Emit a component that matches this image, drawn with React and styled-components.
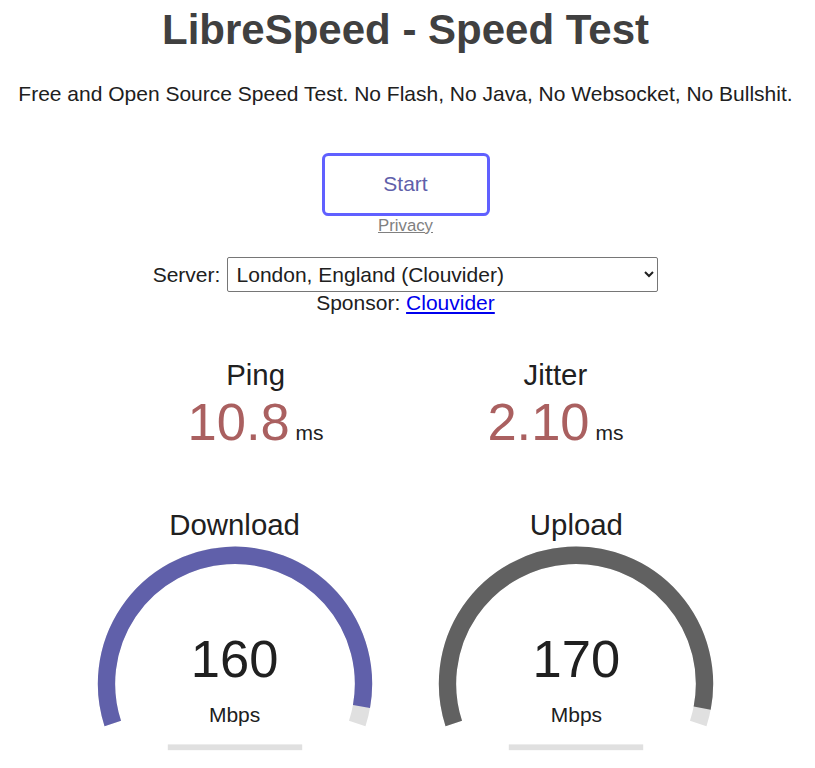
import React from "react";
import styled, { createGlobalStyle } from "styled-components";

const E = 21;

const GlobalStyle = createGlobalStyle`
  html, body {
    margin: 0;
    padding: 0;
    border: none;
    background: #ffffff;
    color: #202020;
  }
  body {
    font-family: "Liberation Sans", Arial, sans-serif;
    font-size: ${E}px;
    text-align: center;
  }
`;

const Page = styled.div`
  display: flex;
  flex-direction: column;
  align-items: center;
  padding-right: 4px;
`;

const Title = styled.h1`
  margin: 6px 0 0;
  font-size: ${2 * E}px;
  line-height: 48px;
  font-weight: bold;
  color: #404040;
`;

const Tagline = styled.p`
  margin: 28px 0 0;
  font-size: ${E}px;
  line-height: 24px;
`;

const StartButton = styled.button`
  margin-top: 47px;
  box-sizing: border-box;
  width: ${8 * E}px;
  height: ${3 * E}px;
  padding: 0;
  font-family: inherit;
  font-size: ${E}px;
  line-height: ${2.7 * E}px;
  color: #6060aa;
  background: transparent;
  border: ${0.15 * E}px solid #6060ff;
  border-radius: ${0.3 * E}px;
  cursor: pointer;
`;

const PrivacyLink = styled.a`
  display: block;
  margin-top: 0;
  font-size: ${0.8 * E}px;
  line-height: 19px;
  color: #808080;
  text-decoration: underline;
`;

const ServerRow = styled.div`
  margin-top: 22px;
  display: flex;
  align-items: center;
  gap: 7px;
  font-size: ${E}px;
`;

const ServerSelect = styled.select`
  box-sizing: border-box;
  width: 431px;
  height: 35px;
  font-family: inherit;
  font-size: ${E}px;
  padding: ${0.2 * E}px;
  color: #202020;
  background: #ffffff;
  border: 1px solid #767676;
  border-radius: 2px;
`;

const SponsorLine = styled.div`
  margin-top: -1px;
  line-height: 24px;
`;

const SponsorLink = styled.a`
  color: #0000ee;
  text-decoration: underline;
`;

const TestArea = styled.div`
  margin-top: 43px;
  display: flex;
  flex-direction: column;
  align-items: center;
`;

const TestGroup = styled.div`
  display: flex;
  justify-content: center;
  gap: ${0.278 * E}px;
`;

const MetricCard = styled.div`
  width: ${14 * E}px;
  height: ${7 * E}px;
  display: flex;
  flex-direction: column;
  align-items: center;
`;

const TestName = styled.div`
  font-size: ${1.4 * E}px;
  line-height: 34px;
`;

const ValueRow = styled.div`
  display: flex;
  align-items: baseline;
  justify-content: center;
  gap: ${0.278 * E}px;
`;

const MeterText = styled.div`
  font-size: ${2.5 * E}px;
  line-height: 60px;
  color: ${(p) => p.$color || "#202020"};
`;

const Unit = styled.div`
  font-size: ${E}px;
  line-height: 24px;
`;

const GaugeBox = styled.div`
  width: ${16 * E}px;
  height: ${12.5 * E}px;
  display: grid;
  & > * {
    grid-area: 1 / 1;
  }
`;

const GaugeSvg = styled.svg`
  width: 100%;
  height: 100%;
  display: block;
`;

const GaugeOverlay = styled.div`
  display: flex;
  flex-direction: column;
  align-items: center;
  position: relative;
  z-index: 1;
`;

const GaugeName = styled(TestName)`
  margin-top: ${0.1 * E * 1.4}px;
  flex: 1;
`;

const GaugeUnit = styled(Unit)`
  margin-top: 14px;
  margin-bottom: 41px;
`;

const meterBk = "#E0E0E0";

function arcPath(cx, cy, r, a0, a1) {
  const x0 = cx + r * Math.cos(a0);
  const y0 = cy + r * Math.sin(a0);
  const x1 = cx + r * Math.cos(a1);
  const y1 = cy + r * Math.sin(a1);
  const large = a1 - a0 > Math.PI ? 1 : 0;
  return `M ${x0} ${y0} A ${r} ${r} 0 ${large} 1 ${x1} ${y1}`;
}

function Gauge({ name, value, unit, color, mbps }) {
  const W = 16 * E;
  const H = 12.5 * E;
  const s = H * 0.0055;
  const lw = 12 * s;
  const cx = W / 2;
  const cy = H - 58 * s;
  const r = H / 1.8 - lw;
  const amount = 1 - 1 / Math.pow(1.3, Math.sqrt(mbps));
  const a0 = -Math.PI * 1.1;
  const aEnd = Math.PI * 0.1;
  const aFg = amount * Math.PI * 1.2 - Math.PI * 1.1;
  return (
    <GaugeBox>
      <GaugeSvg viewBox={`0 0 ${W} ${H}`}>
        <path d={arcPath(cx, cy, r, a0, aEnd)} fill="none" stroke={meterBk} strokeWidth={lw} />
        <path d={arcPath(cx, cy, r, a0, aFg)} fill="none" stroke={color} strokeWidth={lw} />
        <rect x={W * 0.3} y={H - 16 * s} width={W * 0.4} height={4 * s} fill={meterBk} />
      </GaugeSvg>
      <GaugeOverlay>
        <GaugeName>{name}</GaugeName>
        <MeterText>{value}</MeterText>
        <GaugeUnit>{unit}</GaugeUnit>
      </GaugeOverlay>
    </GaugeBox>
  );
}

function Metric({ name, value, unit }) {
  return (
    <MetricCard>
      <TestName>{name}</TestName>
      <ValueRow>
        <MeterText $color="#AA6060">{value}</MeterText>
        <Unit>{unit}</Unit>
      </ValueRow>
    </MetricCard>
  );
}

export default function App() {
  return (
    <>
      <GlobalStyle />
      <Page>
        <Title>LibreSpeed - Speed Test</Title>
        <Tagline>
          Free and Open Source Speed Test. No Flash, No Java, No Websocket, No Bullshit.
        </Tagline>
        <StartButton>Start</StartButton>
        <PrivacyLink href="#">Privacy</PrivacyLink>
        <ServerRow>
          <span>Server:</span>
          <ServerSelect defaultValue="london">
            <option value="london">London, England (Clouvider)</option>
          </ServerSelect>
        </ServerRow>
        <SponsorLine>
          Sponsor: <SponsorLink href="#">Clouvider</SponsorLink>
        </SponsorLine>
        <TestArea>
          <TestGroup>
            <Metric name="Ping" value="10.8" unit="ms" />
            <Metric name="Jitter" value="2.10" unit="ms" />
          </TestGroup>
          <TestGroup>
            <Gauge name="Download" value="160" unit="Mbps" color="#6060AA" mbps={160} />
            <Gauge name="Upload" value="170" unit="Mbps" color="#616161" mbps={170} />
          </TestGroup>
        </TestArea>
      </Page>
    </>
  );
}
